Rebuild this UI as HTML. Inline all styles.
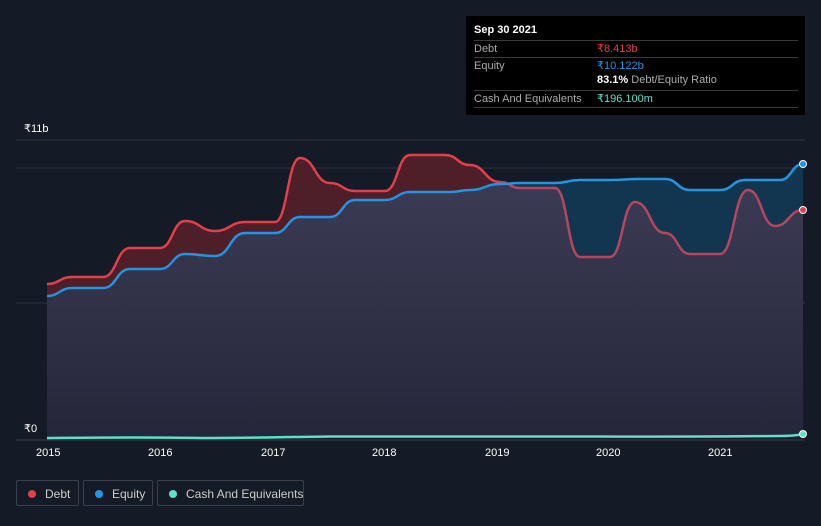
<!DOCTYPE html>
<html><head><meta charset="utf-8"><style>
html,body{margin:0;height:526px}
body{background:#151b26;width:821px;height:526px;overflow:hidden;font-family:"Liberation Sans",sans-serif;position:relative}
.tt{position:absolute;left:466px;top:16px;width:339px;height:99px;background:#000;color:#fff;font-size:11px}
.tt .r{position:absolute;left:8px;width:324px;border-top:1px solid #3a3a3a;height:16px;line-height:16px}
.tt .r span{position:absolute;left:123px}
.lg{position:absolute;top:480px;height:26px;border:1px solid #3a404b;border-radius:2px;color:#ccc;font-size:12px;line-height:26px;box-sizing:border-box;white-space:nowrap}
.lg i{position:absolute;left:11px;top:9px;width:8px;height:8px;border-radius:50%}
.ax{position:absolute;color:#fff;font-size:11px}
</style></head><body>
<svg width="821" height="526" style="position:absolute;left:0;top:0">
<defs>
<clipPath id="ce"><path d="M47,296 C59.5,296 59.5,288 72,288 C87.5,288 87.5,288 103,288 C116.5,288 116.5,269 130,269 C145,269 145,269 160,269 C172.5,269 172.5,254 185,254 C200,254 200,256 215,256 C230,256 230,233 245,233 C260,233 260,233 275,233 C287.5,233 287.5,217 300,217 C315,217 315,217 330,217 C342.5,217 342.5,200 355,200 C370,200 370,200 385,200 C397.5,200 397.5,192 410,192 C430,192 430,192 450,192 C460,192 460,190 470,190 C485,190 485,184 500,184 C510,184 510,183 520,183 C537.5,183 537.5,183 555,183 C567.5,183 567.5,180 580,180 C595,180 595,180 610,180 C625,180 625,179 640,179 C652.5,179 652.5,179 665,179 C677.5,179 677.5,190 690,190 C705,190 705,190 720,190 C732.5,190 732.5,180 745,180 C762.5,180 762.5,180 780,180 C791.5,180 791.5,164 803,164 L803,438 L47,438Z"/></clipPath>
<linearGradient id="g" x1="0" y1="0" x2="0" y2="1"><stop offset="0" stop-color="#3e3d58"/><stop offset="1" stop-color="#25263a"/></linearGradient>
</defs>
<line x1="16" y1="140" x2="805" y2="140" stroke="#2b313d"/>
<line x1="16" y1="168" x2="805" y2="168" stroke="#2b313d"/>
<line x1="16" y1="303" x2="805" y2="303" stroke="#2b313d"/>
<path d="M47,296 C59.5,296 59.5,288 72,288 C87.5,288 87.5,288 103,288 C116.5,288 116.5,269 130,269 C145,269 145,269 160,269 C172.5,269 172.5,254 185,254 C200,254 200,256 215,256 C230,256 230,233 245,233 C260,233 260,233 275,233 C287.5,233 287.5,217 300,217 C315,217 315,217 330,217 C342.5,217 342.5,200 355,200 C370,200 370,200 385,200 C397.5,200 397.5,192 410,192 C430,192 430,192 450,192 C460,192 460,190 470,190 C485,190 485,184 500,184 C510,184 510,183 520,183 C537.5,183 537.5,183 555,183 C567.5,183 567.5,180 580,180 C595,180 595,180 610,180 C625,180 625,179 640,179 C652.5,179 652.5,179 665,179 C677.5,179 677.5,190 690,190 C705,190 705,190 720,190 C732.5,190 732.5,180 745,180 C762.5,180 762.5,180 780,180 C791.5,180 791.5,164 803,164 L803,438 L47,438Z" fill="#123550"/>
<path d="M47,284 C59.5,284 59.5,277 72,277 C87.5,277 87.5,277 103,277 C116.5,277 116.5,248 130,248 C145,248 145,248 160,248 C172.5,248 172.5,221 185,221 C200,221 200,231 215,231 C230,231 230,222 245,222 C260,222 260,222 275,222 C287.5,222 287.5,158 300,158 C315,158 315,183 330,183 C342.5,183 342.5,191 355,191 C370,191 370,191 385,191 C397.5,191 397.5,155 410,155 C427.5,155 427.5,155 445,155 C457.5,155 457.5,165 470,165 C485,165 485,182 500,182 C510,182 510,188 520,188 C537.5,188 537.5,188 555,188 C567.5,188 567.5,257 580,257 C595,257 595,257 610,257 C622.5,257 622.5,202 635,202 C650,202 650,233 665,233 C677.5,233 677.5,254 690,254 C705,254 705,254 720,254 C734,254 734,190 748,190 C761.5,190 761.5,226 775,226 C789,226 789,210 803,210 L803,438 L47,438Z" fill="#4e1e29"/>
<path d="M47,284 C59.5,284 59.5,277 72,277 C87.5,277 87.5,277 103,277 C116.5,277 116.5,248 130,248 C145,248 145,248 160,248 C172.5,248 172.5,221 185,221 C200,221 200,231 215,231 C230,231 230,222 245,222 C260,222 260,222 275,222 C287.5,222 287.5,158 300,158 C315,158 315,183 330,183 C342.5,183 342.5,191 355,191 C370,191 370,191 385,191 C397.5,191 397.5,155 410,155 C427.5,155 427.5,155 445,155 C457.5,155 457.5,165 470,165 C485,165 485,182 500,182 C510,182 510,188 520,188 C537.5,188 537.5,188 555,188 C567.5,188 567.5,257 580,257 C595,257 595,257 610,257 C622.5,257 622.5,202 635,202 C650,202 650,233 665,233 C677.5,233 677.5,254 690,254 C705,254 705,254 720,254 C734,254 734,190 748,190 C761.5,190 761.5,226 775,226 C789,226 789,210 803,210 L803,438 L47,438Z" fill="url(#g)" clip-path="url(#ce)"/>
<path fill="none" stroke="#e0404a" stroke-width="2.5" d="M47,284 C59.5,284 59.5,277 72,277 C87.5,277 87.5,277 103,277 C116.5,277 116.5,248 130,248 C145,248 145,248 160,248 C172.5,248 172.5,221 185,221 C200,221 200,231 215,231 C230,231 230,222 245,222 C260,222 260,222 275,222 C287.5,222 287.5,158 300,158 C315,158 315,183 330,183 C342.5,183 342.5,191 355,191 C370,191 370,191 385,191 C397.5,191 397.5,155 410,155 C427.5,155 427.5,155 445,155 C457.5,155 457.5,165 470,165 C485,165 485,182 500,182"/>
<path fill="none" stroke="#b4475e" stroke-width="2.5" d="M500,182 C510,182 510,188 520,188 C537.5,188 537.5,188 555,188 C567.5,188 567.5,257 580,257 C595,257 595,257 610,257 C622.5,257 622.5,202 635,202 C650,202 650,233 665,233 C677.5,233 677.5,254 690,254 C705,254 705,254 720,254 C734,254 734,190 748,190 C761.5,190 761.5,226 775,226 C789,226 789,210 803,210"/>
<path fill="none" stroke="#2394e0" stroke-width="2.5" d="M47,296 C59.5,296 59.5,288 72,288 C87.5,288 87.5,288 103,288 C116.5,288 116.5,269 130,269 C145,269 145,269 160,269 C172.5,269 172.5,254 185,254 C200,254 200,256 215,256 C230,256 230,233 245,233 C260,233 260,233 275,233 C287.5,233 287.5,217 300,217 C315,217 315,217 330,217 C342.5,217 342.5,200 355,200 C370,200 370,200 385,200 C397.5,200 397.5,192 410,192 C430,192 430,192 450,192 C460,192 460,190 470,190 C485,190 485,184 500,184 C510,184 510,183 520,183 C537.5,183 537.5,183 555,183 C567.5,183 567.5,180 580,180 C595,180 595,180 610,180 C625,180 625,179 640,179 C652.5,179 652.5,179 665,179 C677.5,179 677.5,190 690,190 C705,190 705,190 720,190 C732.5,190 732.5,180 745,180 C762.5,180 762.5,180 780,180 C791.5,180 791.5,164 803,164"/>
<path fill="none" stroke="#5ee0c8" stroke-width="2.5" d="M47,438 C100,437.5 150,437 200,438 C260,438 290,437 330,436.5 C400,436 500,437 600,436.5 C700,437 760,436 780,436 C795,436 798,435 803,434"/>
<circle cx="803" cy="164" r="3.5" fill="#2394e0" stroke="#fff"/>
<circle cx="803" cy="210" r="3.5" fill="#e0404a" stroke="#fff"/>
<circle cx="803" cy="434" r="3.5" fill="#5ee0c8" stroke="#fff"/>
<line x1="16" y1="440" x2="805" y2="440" stroke="#3a404b"/>
</svg>
<div class="ax" style="left:24px;top:122px">₹11b</div>
<div class="ax" style="left:24px;top:422px">₹0</div>
<div class="ax" style="left:36px;top:447px">2015</div>
<div class="ax" style="left:148px;top:447px">2016</div>
<div class="ax" style="left:261px;top:447px">2017</div>
<div class="ax" style="left:372px;top:447px">2018</div>
<div class="ax" style="left:485px;top:447px">2019</div>
<div class="ax" style="left:596px;top:447px">2020</div>
<div class="ax" style="left:708px;top:447px">2021</div>
<div class="tt">
<div style="position:absolute;left:8px;top:8px;font-weight:bold">Sep 30 2021</div>
<div class="r" style="top:24px;color:#aaa">Debt<span style="color:#e0404a">₹8.413b</span></div>
<div class="r" style="top:41px;color:#aaa">Equity<span style="color:#2394e0">₹10.122b</span></div>
<div style="position:absolute;left:131px;top:58px;color:#fff"><b>83.1%</b> <span style="color:#aaa">Debt/Equity Ratio</span></div>
<div class="r" style="top:74px;color:#aaa;border-bottom:1px solid #3a3a3a">Cash And Equivalents<span style="color:#5ee0c8">₹196.100m</span></div>
</div>
<div class="lg" style="left:16px;width:63px"><i style="background:#e0404a"></i><span style="position:absolute;left:28px">Debt</span></div>
<div class="lg" style="left:83px;width:70px"><i style="background:#2394e0"></i><span style="position:absolute;left:28px">Equity</span></div>
<div class="lg" style="left:157px;width:147px"><i style="background:#5ee0c8"></i><span style="position:absolute;left:28px">Cash And Equivalents</span></div>
</body></html>
